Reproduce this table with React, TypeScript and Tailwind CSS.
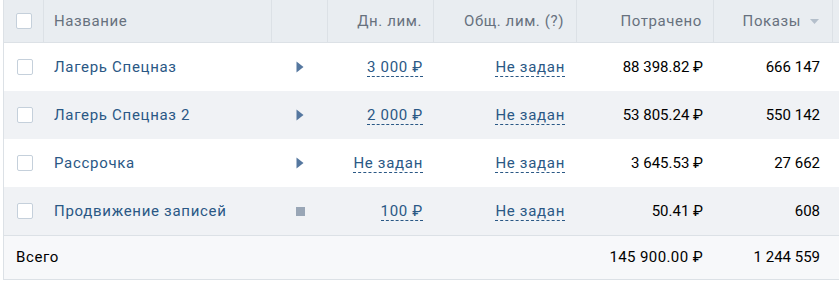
import { ReactNode } from 'react';

type Row = {
  name: string;
  status: 'play' | 'stop';
  daily: string;
  total: string;
  spent: string;
  shows: string;
};

const rows: Row[] = [
  { name: 'Лагерь Спецназ', status: 'play', daily: '3 000 ₽', total: 'Не задан', spent: '88 398.82 ₽', shows: '666 147' },
  { name: 'Лагерь Спецназ 2', status: 'play', daily: '2 000 ₽', total: 'Не задан', spent: '53 805.24 ₽', shows: '550 142' },
  { name: 'Рассрочка', status: 'play', daily: 'Не задан', total: 'Не задан', spent: '3 645.53 ₽', shows: '27 662' },
  { name: 'Продвижение записей', status: 'stop', daily: '100 ₽', total: 'Не задан', spent: '50.41 ₽', shows: '608' },
];

function Checkbox() {
  return <span className="block w-[16px] h-[16px] border border-[#c5d0db] bg-white rounded-[2px]" />;
}

function Dashed({ children }: { children: ReactNode }) {
  return (
    <span className="text-[#2a5885] tracking-[0.7px] border-b border-dashed border-[#2a5885] leading-[18px]">
      {children}
    </span>
  );
}

function StatusIcon({ status }: { status: Row['status'] }) {
  if (status === 'play') {
    return (
      <svg width="8" height="12" viewBox="0 0 8 12">
        <path d="M0.5 0.5 L7.5 6 L0.5 11.5 Z" fill="#55779f" />
      </svg>
    );
  }
  return <span className="block w-[9px] h-[9px] bg-[#99a6b6]" />;
}

export default function App() {
  return (
    <div className="w-[839px] h-[281px] overflow-hidden bg-white font-['Roboto',sans-serif] text-[15px]">
      <div className="ml-[3px] w-[900px] border-l border-b border-[#dce1e6]">
        {/* шапка таблицы */}
        <div className="flex h-[43px] bg-[#e9edf1] text-[#67717e] tracking-[0.6px] border-b border-[#dce1e6]">
          <div className="w-[40px] flex items-center justify-center border-r border-[#dce1e6] pl-[1px]">
            <Checkbox />
          </div>
          <div className="w-[228px] flex items-center pl-[10px] border-r border-[#dce1e6]">Название</div>
          <div className="w-[56px] border-r border-[#dce1e6]" />
          <div className="w-[106px] flex items-center justify-end pr-[11px] border-r border-[#dce1e6]">Дн. лим.</div>
          <div className="w-[143px] flex items-center justify-end pr-[12px] border-r border-[#dce1e6]">Общ. лим. (?)</div>
          <div className="w-[137px] flex items-center justify-end pr-[11px] border-r border-[#dce1e6]">Потрачено</div>
          <div className="w-[119px] flex items-center justify-end pr-[13px] gap-[9px] border-r border-[#dce1e6]">
            <span>Показы</span>
            <svg width="9" height="5" viewBox="0 0 9 5">
              <path d="M0 0 L9 0 L4.5 5 Z" fill="#b4bfcb" />
            </svg>
          </div>
          <div className="flex-1" />
        </div>

        {rows.map((r, i) => (
          <div key={r.name} className={`flex h-[48px] ${i % 2 === 1 ? 'bg-[#f0f2f5]' : 'bg-white'}`}>
            <div className="w-[40px] flex items-center justify-center pl-[1px]">
              <Checkbox />
            </div>
            <div className="w-[228px] flex items-center pl-[10px] text-[#2a5885] tracking-[0.7px]">{r.name}</div>
            <div className="w-[56px] flex items-center justify-center">
              <StatusIcon status={r.status} />
            </div>
            <div className="w-[106px] flex items-center justify-end pr-[11px]">
              <Dashed>{r.daily}</Dashed>
            </div>
            <div className="w-[143px] flex items-center justify-end pr-[12px]">
              <Dashed>{r.total}</Dashed>
            </div>
            <div className="w-[137px] flex items-center justify-end pr-[11px] text-black">{r.spent}</div>
            <div className="w-[119px] flex items-center justify-end pr-[13px] text-black">{r.shows}</div>
            <div className="flex-1" />
          </div>
        ))}

        {/* итоговая строка */}
        <div className="flex h-[44px] bg-[#f7f8fa] border-t border-[#dce1e6] text-black">
          <div className="w-[268px] flex items-center pl-[12px] tracking-[0.6px]">Всего</div>
          <div className="w-[56px]" />
          <div className="w-[106px]" />
          <div className="w-[143px]" />
          <div className="w-[137px] flex items-center justify-end pr-[11px] tracking-[0.4px]">145 900.00 ₽</div>
          <div className="w-[119px] flex items-center justify-end pr-[13px]">1 244 559</div>
          <div className="flex-1" />
        </div>
      </div>
    </div>
  );
}
